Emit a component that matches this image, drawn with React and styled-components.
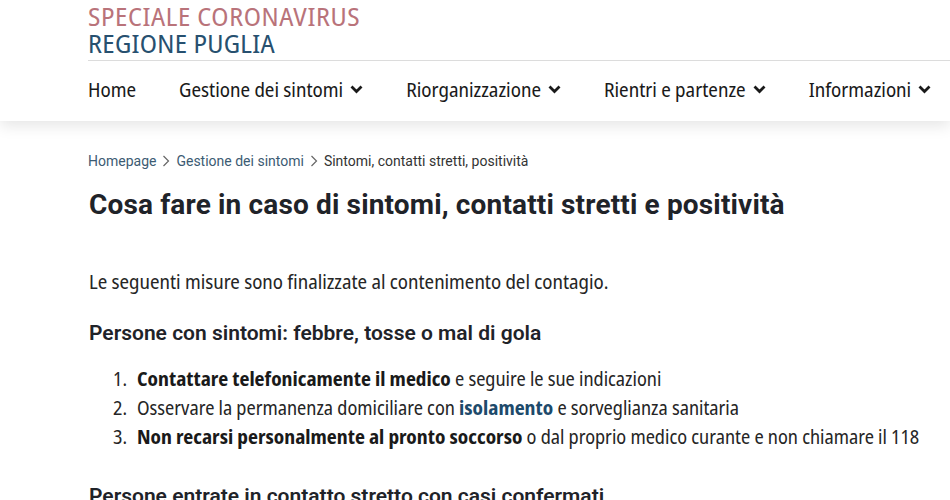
import React from "react";
import styled, { createGlobalStyle } from "styled-components";

const TITILLIUM = `"Noto Sans Display", "Open Sans", sans-serif`;

const Global = createGlobalStyle`
  html, body { margin: 0; padding: 0; background: #fff; }
  body { font-family: ${TITILLIUM}; color: #1f1f1f; overflow: hidden; }
  * { box-sizing: border-box; }
`;

const Header = styled.header`
  background: #fff;
  padding-left: 88px;
  box-shadow: 0 5px 14px rgba(0, 0, 0, 0.1);
  position: relative;
  z-index: 1;
`;

const Brand = styled.div`
  display: flex;
  flex-direction: column;
  padding-top: 3px;
  height: 61px;
  border-bottom: 1px solid #dcdcdc;
  font-family: ${TITILLIUM};
  font-stretch: semi-condensed;
  font-size: 26px;
  line-height: 26.5px;
`;

const BrandLine = styled.span`
  color: ${(p) => p.$color};
  letter-spacing: ${(p) => p.$ls}px;
`;

const Nav = styled.nav`
  display: flex;
  align-items: center;
  height: 60px;
  padding-bottom: 4px;
  gap: 43px;
  font-family: ${TITILLIUM};
  font-stretch: semi-condensed;
  font-size: 19.7px;
  color: #1a1a1a;
`;

const NavItem = styled.span`
  display: flex;
  align-items: center;
  gap: 7px;
  white-space: nowrap;
`;

const Chevron = () => (
  <svg width="13" height="9" viewBox="0 0 13 9">
    <path d="M1.5 1.5 L6.5 6.5 L11.5 1.5" fill="none" stroke="#1a1a1a" strokeWidth="2.8" />
  </svg>
);

const Main = styled.main`
  padding: 28px 0 0 89px;
`;

const Crumbs = styled.div`
  display: flex;
  align-items: center;
  gap: 6px;
  font-family: Roboto, sans-serif;
  font-size: 14px;
  height: 24px;
  margin-left: -1px;
`;

const Crumb = styled.span`
  color: ${(p) => (p.$current ? "#333" : "#3c5b73")};
`;

const Sep = () => (
  <svg width="8" height="12" viewBox="0 0 8 12">
    <path d="M1.5 1 L6.5 6 L1.5 11" fill="none" stroke="#666" strokeWidth="1.2" />
  </svg>
);

const Title = styled.h1`
  margin: 15px 0 0;
  font-family: Roboto, sans-serif;
  font-weight: 700;
  font-size: 28px;
  line-height: 34px;
  letter-spacing: 0.15px;
  color: #1f2329;
`;

const Para = styled.p`
  margin: 46px 0 0;
  font-family: ${TITILLIUM};
  font-stretch: semi-condensed;
  font-size: 19.6px;
  line-height: 28px;
  color: #262626;
`;

const H2 = styled.h2`
  margin: ${(p) => p.$mt}px 0 0;
  font-family: Roboto, sans-serif;
  font-weight: 600;
  font-size: 21px;
  line-height: 28px;
  color: #1f2329;
`;

const List = styled.ol`
  margin: 18px 0 0;
  padding-left: 24px;
  list-style: none;
  counter-reset: item;
  font-family: ${TITILLIUM};
  font-stretch: semi-condensed;
  font-size: 19px;
  line-height: 29px;
  color: #262626;
`;

const Item = styled.li`
  counter-increment: item;
  display: flex;
  white-space: nowrap;
  &::before {
    content: counter(item) ".";
    width: 24px;
    flex: none;
  }
`;

const Bold = styled.b`
  font-weight: 700;
  color: #1a1a1a;
`;

const Link = styled.a`
  color: #1d4a6b;
  font-weight: 700;
  text-decoration: none;
`;

export default function App() {
  const navs = ["Gestione dei sintomi", "Riorganizzazione", "Rientri e partenze", "Informazioni"];
  return (
    <>
      <Global />
      <Header>
        <Brand>
          <BrandLine $color="#b9737a" $ls={0.6}>SPECIALE CORONAVIRUS</BrandLine>
          <BrandLine $color="#27506f" $ls={0.3}>REGIONE PUGLIA</BrandLine>
        </Brand>
        <Nav>
          <NavItem>Home</NavItem>
          {navs.map((n) => (
            <NavItem key={n}>
              {n}
              <Chevron />
            </NavItem>
          ))}
        </Nav>
      </Header>
      <Main>
        <Crumbs>
          <Crumb>Homepage</Crumb>
          <Sep />
          <Crumb>Gestione dei sintomi</Crumb>
          <Sep />
          <Crumb $current>Sintomi, contatti stretti, positività</Crumb>
        </Crumbs>
        <Title>Cosa fare in caso di sintomi, contatti stretti e positività</Title>
        <Para>Le seguenti misure sono finalizzate al contenimento del contagio.</Para>
        <H2 $mt={23}>Persone con sintomi: febbre, tosse o mal di gola</H2>
        <List>
          <Item>
            <span>
              <Bold>Contattare telefonicamente il medico</Bold> e seguire le sue indicazioni
            </span>
          </Item>
          <Item>
            <span>
              Osservare la permanenza domiciliare con <Link href="#">isolamento</Link> e sorveglianza sanitaria
            </span>
          </Item>
          <Item>
            <span>
              <Bold>Non recarsi personalmente al pronto soccorso</Bold> o dal proprio medico curante e non chiamare il 118
            </span>
          </Item>
        </List>
        <H2 $mt={30}>Persone entrate in contatto stretto con casi confermati</H2>
      </Main>
    </>
  );
}
